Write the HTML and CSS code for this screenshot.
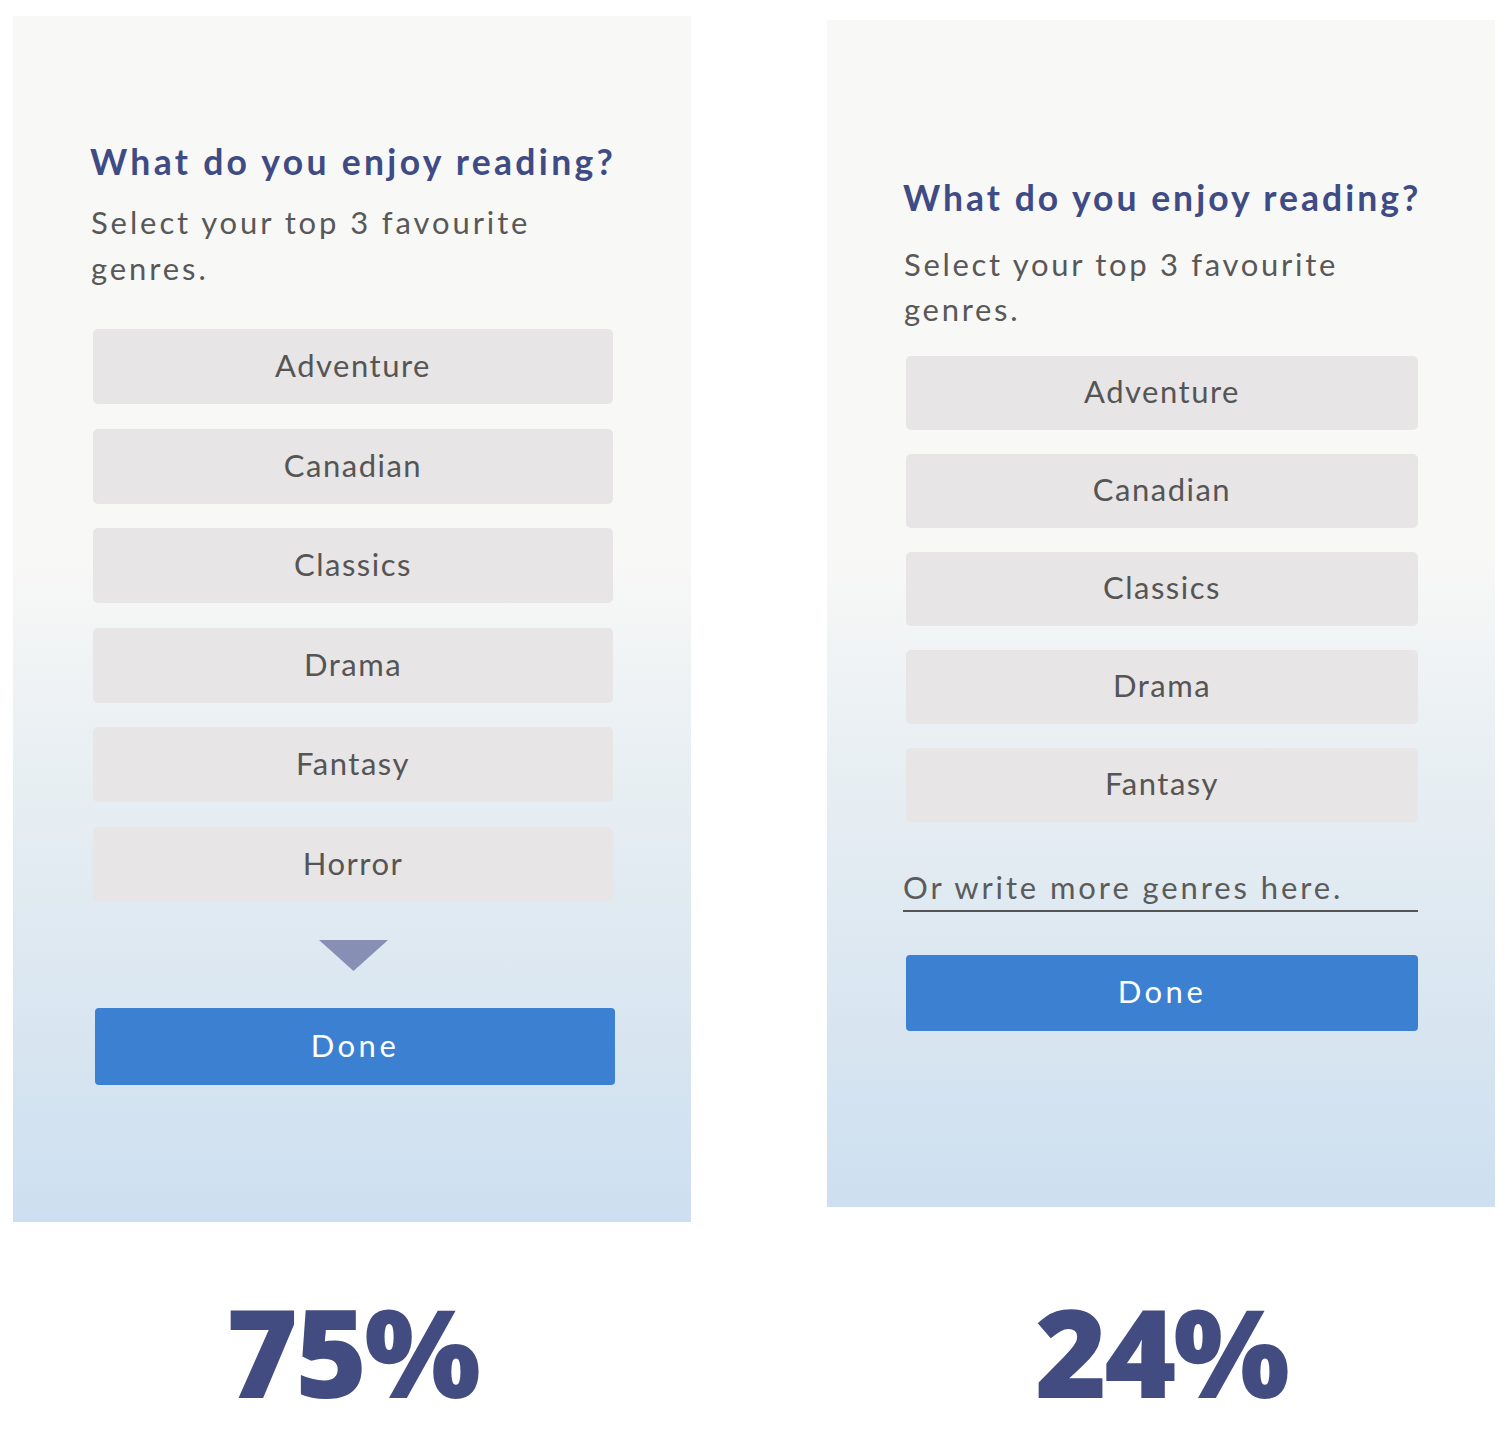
FILE: index.html
```html
<!DOCTYPE html>
<html lang="en">
<head>
<meta charset="utf-8">
<title>Genre selection comparison</title>
<link rel="stylesheet" href="styles.css">
</head>
<body>
<main class="compare">
  <section class="screen screen--list">
    <h1 class="title">What do you enjoy reading?</h1>
    <p class="subtitle">Select your top 3 favourite genres.</p>
    <ul class="genres">
      <li class="genre">Adventure</li>
      <li class="genre">Canadian</li>
      <li class="genre">Classics</li>
      <li class="genre">Drama</li>
      <li class="genre">Fantasy</li>
      <li class="genre">Horror</li>
    </ul>
    <div class="more-arrow">
      <svg width="69" height="31" viewBox="0 0 69 31" aria-hidden="true"><polygon points="0,0 69,0 34.5,31" fill="#8790b4"/></svg>
    </div>
    <button class="done">Done</button>
  </section>
  <section class="screen screen--input">
    <h1 class="title">What do you enjoy reading?</h1>
    <p class="subtitle">Select your top 3 favourite genres.</p>
    <ul class="genres">
      <li class="genre">Adventure</li>
      <li class="genre">Canadian</li>
      <li class="genre">Classics</li>
      <li class="genre">Drama</li>
      <li class="genre">Fantasy</li>
    </ul>
    <div class="write-in">Or write more genres here.</div>
    <button class="done">Done</button>
  </section>
  <div class="stat stat--left">75%</div>
  <div class="stat stat--right">24%</div>
</main>
</body>
</html>
```
FILE: styles.css
```css
html, body {
  margin: 0;
  padding: 0;
  background: #ffffff;
}

body {
  font-family: "Lato", "Noto Sans", sans-serif;
}

.compare {
  display: grid;
  grid-template-columns: 678px 668px;
  column-gap: 136px;
  padding-left: 13px;
  align-items: start;
}

.screen {
  box-sizing: border-box;
  background: linear-gradient(180deg, #f8f8f7 0%, #f8f8f7 45%, #eaf0f3 60%, #dde8f1 78%, #cddff0 100%);
}

.screen--list {
  margin-top: 16px;
  height: 1206px;
  padding: 124px 78px 0 80px;
}

.screen--input {
  margin-top: 20px;
  height: 1187px;
  padding: 156px 77px 0 79px;
}

.title {
  margin: 0;
  font-size: 35.5px;
  line-height: 44px;
  font-weight: 700;
  letter-spacing: 3.3px;
  color: #3f4b84;
  white-space: nowrap;
  margin-left: -3px;
}

.screen--input .title {
  letter-spacing: 3px;
}

.subtitle {
  margin: 15px 0 0;
  font-size: 31px;
  line-height: 46px;
  letter-spacing: 2.9px;
  color: #585858;
  width: 500px;
  margin-left: -2px;
}

.screen--input .subtitle {
  margin-top: 22px;
  line-height: 45px;
  letter-spacing: 2.7px;
}

.genres {
  list-style: none;
  margin: 38px 0 0;
  padding: 0;
  display: flex;
  flex-direction: column;
  gap: 24.6px;
}

.screen--input .genres {
  margin-top: 23.5px;
  gap: 24px;
}

.genre {
  box-sizing: border-box;
  height: 75px;
  padding-bottom: 3px;
  border-radius: 5px;
  background: #e7e5e6;
  color: #555555;
  font-size: 31px;
  letter-spacing: 1.5px;
  display: flex;
  align-items: center;
  justify-content: center;
}

.screen--input .genre {
  height: 74px;
}

.more-arrow {
  display: flex;
  justify-content: center;
  margin-top: 38px;
  height: 31px;
}

.more-arrow svg {
  display: block;
}

.done {
  display: block;
  box-sizing: border-box;
  width: 520px;
  height: 77px;
  margin: 37px 0 0 2px;
  border: 0;
  border-radius: 4px;
  background: #3c80d2;
  color: #ffffff;
  font-family: "Lato", "Noto Sans", sans-serif;
  font-size: 31px;
  letter-spacing: 3.5px;
  padding: 0 0 3px;
}

.screen--input .done {
  width: 512px;
  height: 76px;
  margin: 43px 0 0 0;
}

.write-in {
  margin: 45px 0 0 -3px;
  height: 40px;
  line-height: 40px;
  padding-bottom: 3px;
  border-bottom: 2px solid #555555;
  font-size: 31px;
  letter-spacing: 2.9px;
  color: #5b5b5b;
}

.stat {
  margin-top: 61px;
  text-align: center;
  font-family: "Open Sans", "Lato", sans-serif;
  font-weight: 800;
  font-size: 123px;
  line-height: 136px;
  color: #424c80;
  letter-spacing: -3px;
}
```
